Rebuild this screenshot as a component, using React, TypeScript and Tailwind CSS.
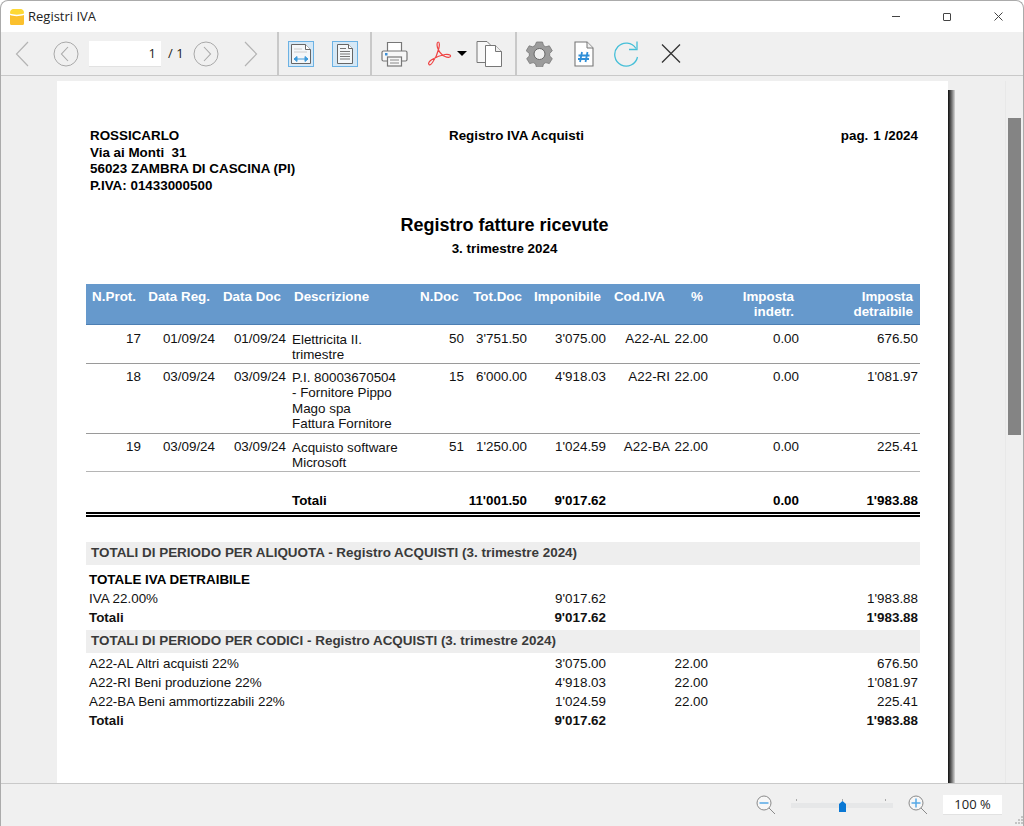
import React from "react";

const cols =
  "grid grid-cols-[55px_74px_71px_134px_44px_63px_79px_64px_38px_91px_119px_2px]";

const rows = [
  {
    height: "h-[39px] pt-[6px]",
    border: "border-[#9a9a9a]",
    prot: "17",
    reg: "01/09/24",
    doc: "01/09/24",
    descr: ["Elettricita II.", "trimestre"],
    nDoc: "50",
    tot: "3'751.50",
    imp: "3'075.00",
    cod: "A22-AL",
    perc: "22.00",
    ind: "0.00",
    det: "676.50",
  },
  {
    height: "h-[70px] pt-[5px]",
    border: "border-[#9a9a9a]",
    prot: "18",
    reg: "03/09/24",
    doc: "03/09/24",
    descr: ["P.I. 80003670504", "- Fornitore Pippo", "Mago spa", "Fattura Fornitore"],
    nDoc: "15",
    tot: "6'000.00",
    imp: "4'918.03",
    cod: "A22-RI",
    perc: "22.00",
    ind: "0.00",
    det: "1'081.97",
  },
  {
    height: "h-[38px] pt-[5px]",
    border: "border-[#b5b5b5]",
    prot: "19",
    reg: "03/09/24",
    doc: "03/09/24",
    descr: ["Acquisto software", "Microsoft"],
    nDoc: "51",
    tot: "1'250.00",
    imp: "1'024.59",
    cod: "A22-BA",
    perc: "22.00",
    ind: "0.00",
    det: "225.41",
  },
];

const Back = ({ flip = false }: { flip?: boolean }) => (
  <svg width="14" height="26" viewBox="0 0 14 26" className={flip ? "rotate-180" : ""}>
    <path d="M13 1 1.5 13 13 25" fill="none" stroke="#b4b4b4" strokeWidth="1.2" />
  </svg>
);

const CircleArrow = ({ flip = false }: { flip?: boolean }) => (
  <svg width="26" height="26" viewBox="0 0 26 26" className={flip ? "rotate-180" : ""}>
    <circle cx="13" cy="13" r="12" fill="none" stroke="#a8a8a8" strokeWidth="1" />
    <path d="M15 6 8.5 13 15 20" fill="none" stroke="#a8a8a8" strokeWidth="1.1" />
  </svg>
);

const FitWidth = () => (
  <svg width="26" height="26" viewBox="0 0 26 26">
    <rect x="0.5" y="0.5" width="25" height="25" fill="#d5e8f6" stroke="#6cb2e4" />
    <path d="M3.5 3.5h14l5 5v14h-19z" fill="#f4f7f9" stroke="#666" />
    <path d="M17.5 3.5v5h5" fill="#fff" stroke="#666" />
    <path d="M6 8h8M6 11h13" stroke="#ccc" />
    <path d="M6 18h14M6 18l3-2.500v5zM20 18l-3-2.500v5z" fill="#3d9bdc" stroke="#3d9bdc" />
  </svg>
);

const FitPage = () => (
  <svg width="26" height="26" viewBox="0 0 26 26">
    <rect x="0.5" y="0.5" width="25" height="25" fill="#d5e8f6" stroke="#6cb2e4" />
    <path d="M5.5 3.5h11l4 4v15h-15z" fill="#f4f7f9" stroke="#666" />
    <path d="M16.5 3.5v4h4" fill="#fff" stroke="#666" />
    <path d="M8 7.500h6M8 10.500h10M8 13h10M8 15.500h10M8 18h10" stroke="#777" />
  </svg>
);

const Printer = () => (
  <svg width="27" height="26" viewBox="0 0 27 26">
    <path d="M6.5 10V1.500h14V10" fill="#fff" stroke="#777" strokeWidth="1.2" />
    <rect x="1" y="10" width="25" height="10" rx="1.5" fill="#f7f7f7" stroke="#777" strokeWidth="1.2" />
    <rect x="4" y="12" width="2.5" height="2.5" fill="#3d8fd6" />
    <rect x="6.5" y="16" width="14" height="9" fill="#f7f7f7" stroke="#777" strokeWidth="1.2" />
    <path d="M9 19h9M9 22h9" stroke="#888" />
  </svg>
);

const PdfIcon = () => (
  <svg width="25" height="25" viewBox="0 0 25 25">
    <path
      d="M2 23.500c-1.400-1.300.6-3.600 3-5 3-1.800 9-4.400 13-5 2.700-.4 5.600.1 5.600 1.500 0 1.700-3.300 1.600-5.600.5-3.400-1.600-6.400-5.400-7.500-9-.6-2-.8-5.500.7-5.500 1.600 0 1.300 3.700.6 6.500-1 4.200-3.900 10.800-6.300 14-1.200 1.600-2.500 3-3.500 2z"
      fill="none"
      stroke="#ef4444"
      strokeWidth="1.2"
    />
  </svg>
);

const CopyIcon = () => (
  <svg width="27" height="26" viewBox="0 0 27 26">
    <path d="M1 .5h10l3 3v18H1z" fill="#f7f7f7" stroke="#777" strokeWidth="1" />
    <path d="M9.500 4.500h10l6 6v15h-16z" fill="#fff" stroke="#777" strokeWidth="1" />
    <path d="M19.500 4.500v6h6" fill="#f0f0f0" stroke="#777" strokeWidth="1" />
  </svg>
);

const Gear = () => (
  <svg width="27" height="26" viewBox="0 0 27 26">
    <path
      d="M10.500 1h6l1 3.500 2.300 1.300 3.500-1 3 5-2.600 2.600v2.600l2.600 2.600-3 5-3.500-1-2.300 1.300-1 3.500h-6l-1-3.500-2.300-1.300-3.500 1-3-5 2.600-2.600v-2.600L.2 9.800l3-5 3.500 1L9 4.500z"
      fill="#9c9c9c"
      stroke="#777"
      strokeWidth="0.8"
    />
    <circle cx="13.500" cy="13" r="5.500" fill="#f0f0f0" stroke="#666" strokeWidth="1" />
  </svg>
);

const HashDoc = () => (
  <svg width="20" height="26" viewBox="0 0 20 26">
    <path d="M1 1h12l6 6v18H1z" fill="#fff" stroke="#777" strokeWidth="1.1" />
    <path d="M13 1v6h6" fill="#f0f0f0" stroke="#777" strokeWidth="1" />
    <path d="M8 11l-2 10M13.500 11l-2 10M4.500 14.500h11M4 18h11" stroke="#2f8fd8" strokeWidth="1.8" fill="none" />
  </svg>
);

const Refresh = () => (
  <svg width="26" height="26" viewBox="0 0 26 26">
    <path d="M22 7.500A11.500 11.500 0 1 0 23.500 16" fill="none" stroke="#45bfd8" strokeWidth="1.3" />
    <path d="M23 .5v8h-8" fill="none" stroke="#45bfd8" strokeWidth="1.3" />
  </svg>
);

const Magnifier = ({ plus = false }: { plus?: boolean }) => (
  <svg width="20" height="20" viewBox="0 0 20 20">
    <circle cx="8" cy="8" r="7" fill="#f7f7f7" stroke="#8a8a8a" strokeWidth="1" />
    <path d="M13 13l6 6" stroke="#8a8a8a" strokeWidth="1" />
    <path d="M3.500 8h9" stroke="#56a8e6" strokeWidth="1.5" />
    {plus && <path d="M8 3.500v9" stroke="#56a8e6" strokeWidth="1.5" />}
  </svg>
);

const Separator = () => <div className="h-[43px] w-[2px] bg-[#c9c9c9]" />;

const InvoiceRow = ({ row }: { row: (typeof rows)[number] }) => (
  <div className={`${cols} ${row.height} border-b ${row.border} text-right`}>
    <div>{row.prot}</div>
    <div>{row.reg}</div>
    <div>{row.doc}</div>
    <div className="pl-[6px] pt-[1px] text-left">
      {row.descr.map((line) => (
        <div key={line}>{line}</div>
      ))}
    </div>
    <div>{row.nDoc}</div>
    <div>{row.tot}</div>
    <div>{row.imp}</div>
    <div>{row.cod}</div>
    <div>{row.perc}</div>
    <div>{row.ind}</div>
    <div>{row.det}</div>
  </div>
);

const SummaryRow = ({
  label,
  imp,
  perc,
  det,
  bold = false,
}: {
  label: string;
  imp: string;
  perc?: string;
  det: string;
  bold?: boolean;
}) => (
  <div className={`${cols} h-[19px] items-center text-right ${bold ? "font-bold" : ""}`}>
    <div className="col-span-6 pl-[3px] text-left">{label}</div>
    <div className="col-start-7">{imp}</div>
    <div className="col-span-2 col-start-8">{perc}</div>
    <div className="col-span-2 col-start-10">{det}</div>
  </div>
);

export default function App() {
  return (
    <div className="flex h-[826px] w-[1024px] flex-col overflow-hidden rounded-t-[8px] border-x border-t border-[#ababab] bg-white font-['Liberation_Sans',sans-serif] text-[13.400px] leading-[15.300px] text-[#111]">
      {/* title bar */}
      <div className="flex h-[31px] shrink-0 items-center pl-[9px] font-['Open_Sans',sans-serif] text-[13px] text-[#222]">
        <svg width="14" height="16" viewBox="0 0 14 16">
          <path d="M0 6c3 1.500 10 1.500 14 0v8.500a1.500 1.500 0 0 1-1.500 1.500h-11A1.500 1.500 0 0 1 0 14.500z" fill="#fbc02d" />
          <path d="M0 3.500C0 1.500 2 0 3 0h8c1 0 3 1.500 3 3.500V4.500C10 6 3.500 6 0 4.500z" fill="#fdd835" />
        </svg>
        <span className="ml-[4px]">Registri IVA</span>
        <div className="ml-auto flex items-center pr-[20px]">
          <div className="h-[1px] w-[8px] bg-[#444]" />
          <div className="ml-[43px] h-[8px] w-[8px] rounded-[1px] border border-[#444]" />
          <svg width="9" height="9" viewBox="0 0 9 9" className="ml-[43px]">
            <path d="M.5.500l8 8M8.500.500l-8 8" stroke="#444" strokeWidth="1" />
          </svg>
        </div>
      </div>

      {/* toolbar */}
      <div className="flex h-[44px] shrink-0 items-center border-b border-[#c9c9c9] bg-[#f0f0f0] font-['Open_Sans',sans-serif] text-[13px] text-[#222]">
        <div className="ml-[14px]"><Back /></div>
        <div className="ml-[24px]"><CircleArrow /></div>
        <div className="ml-[10px] flex h-[26px] w-[72px] items-center justify-end border-b border-[#e2e2e2] bg-white pr-[5px] pt-[1px]">1</div>
        <div className="ml-[7px] w-[18px] pt-[1px]">/ 1</div>
        <div className="ml-[7px]"><CircleArrow flip /></div>
        <div className="ml-[25px]"><Back flip /></div>
        <div className="ml-[19px]"><Separator /></div>
        <div className="ml-[9px]"><FitWidth /></div>
        <div className="ml-[18px]"><FitPage /></div>
        <div className="ml-[12px]"><Separator /></div>
        <div className="ml-[9px]"><Printer /></div>
        <div className="ml-[19px]"><PdfIcon /></div>
        <div className="ml-[5px] h-0 w-0 border-x-[5px] border-t-[5px] border-x-transparent border-t-black" />
        <div className="ml-[9px]"><CopyIcon /></div>
        <div className="ml-[12px]"><Separator /></div>
        <div className="ml-[9px]"><Gear /></div>
        <div className="ml-[21px]"><HashDoc /></div>
        <div className="ml-[20px]"><Refresh /></div>
        <svg width="20" height="19" viewBox="0 0 20 19" className="ml-[21px]">
          <path d="M1 .500l18 18M19 .500l-18 18" stroke="#333" strokeWidth="1.3" />
        </svg>
      </div>

      {/* document area */}
      <div className="flex min-h-0 flex-1 bg-[#efefef] pl-[56px] pt-[5px]">
        <div className="h-[702px] w-[891px] shrink-0 bg-white pl-[29px] pr-[28px] pt-[47px]">
          <div className="flex h-[66px] pl-[4px] font-bold leading-[16.500px] text-black">
            <div className="w-[280px]">
              <div>ROSSICARLO</div>
              <div>Via ai Monti&nbsp; 31</div>
              <div>56023 ZAMBRA DI CASCINA (PI)</div>
              <div>P.IVA: 01433000500</div>
            </div>
            <div className="ml-[79px]">Registro IVA Acquisti</div>
            <div className="ml-auto pr-[2px]">
              pag.<span className="ml-[5px]">1 /2024</span>
            </div>
          </div>

          <div className="mt-[21px] pl-[3px] text-center text-[18px] font-bold leading-[20px] text-black">
            Registro fatture ricevute
          </div>
          <div className="mt-[6px] pl-[3px] text-center font-bold leading-[16px] text-black">
            3. trimestre 2024
          </div>

          <div className={`${cols} mt-[27px] h-[41px] border-b border-[#4d7fb3] bg-[#6699cc] pt-[5px] text-right font-bold text-white`}>
            <div className="pr-[5px]">N.Prot.</div>
            <div className="pr-[5px]">Data Reg.</div>
            <div className="pr-[5px]">Data Doc</div>
            <div className="pl-[8px] text-left">Descrizione</div>
            <div className="pr-[7px]">N.Doc</div>
            <div className="pr-[5px]">Tot.Doc</div>
            <div className="pr-[5px]">Imponibile</div>
            <div className="pr-[5px]">Cod.IVA</div>
            <div className="pr-[5px]">%</div>
            <div className="pr-[5px]">Imposta<br />indetr.</div>
            <div className="pr-[5px]">Imposta<br />detraibile</div>
          </div>

          {rows.map((row) => (
            <InvoiceRow key={row.prot} row={row} />
          ))}

          <div className={`${cols} mt-[21px] h-[19px] text-right font-bold text-black`}>
            <div className="col-span-3" />
            <div className="pl-[6px] text-left">Totali</div>
            <div className="col-span-2">11'001.50</div>
            <div>9'017.62</div>
            <div className="col-span-2" />
            <div>0.00</div>
            <div>1'983.88</div>
          </div>
          <div className="h-[5px] border-y-2 border-black" />

          <div className="mt-[25px] flex h-[23px] items-center bg-[#eeeeee] pb-[2px] pl-[5px] text-[13.450px] font-bold text-[#3a3a3a]">
            TOTALI DI PERIODO PER ALIQUOTA - Registro ACQUISTI (3. trimestre 2024)
          </div>
          <div className="flex h-[24px] items-end pb-[2px] pl-[3px] font-bold text-black">TOTALE IVA DETRAIBILE</div>
          <SummaryRow label="IVA 22.00%" imp="9'017.62" det="1'983.88" />
          <SummaryRow label="Totali" imp="9'017.62" det="1'983.88" bold />
          <div className="mt-[3px] flex h-[23px] items-center bg-[#eeeeee] pb-[2px] pl-[5px] text-[13.450px] font-bold text-[#3a3a3a]">
            TOTALI DI PERIODO PER CODICI - Registro ACQUISTI (3. trimestre 2024)
          </div>
          <div className="h-[1px]" />
          <SummaryRow label="A22-AL Altri acquisti 22%" imp="3'075.00" perc="22.00" det="676.50" />
          <SummaryRow label="A22-RI Beni produzione 22%" imp="4'918.03" perc="22.00" det="1'081.97" />
          <SummaryRow label="A22-BA Beni ammortizzabili 22%" imp="1'024.59" perc="22.00" det="225.41" />
          <SummaryRow label="Totali" imp="9'017.62" det="1'983.88" bold />
        </div>
        <div className="mt-[9px] h-[693px] w-[7px] shrink-0 bg-gradient-to-r from-[#111] to-[#d8d8d8]" />
        <div className="ml-auto h-full w-[18px] shrink-0 border-l border-[#e8e8e8] pl-[2px] pt-[37px]">
          <div className="h-[317px] w-[13px] bg-[#848484]" />
        </div>
      </div>

      {/* status bar */}
      <div className="flex h-[43px] shrink-0 items-center border-t border-[#c9c9c9] bg-[#f0f0f0] pl-[755px] font-['Open_Sans',sans-serif] text-[13px] text-[#222]">
        <Magnifier />
        <div className="relative ml-[15px] h-[5px] w-[102px] bg-[#e6e7e8]">
          <div className="absolute left-[5px] top-[-4px] h-[2px] w-[1px] bg-[#aaa]" />
          <div className="absolute left-[51px] top-[-4px] h-[2px] w-[1px] bg-[#aaa]" />
          <div className="absolute left-[94px] top-[-4px] h-[2px] w-[1px] bg-[#aaa]" />
          <svg width="7" height="11" viewBox="0 0 7 11" className="absolute left-[48px] top-[-2px]">
            <path d="M3.500 0 7 3v8H0V3z" fill="#0a78d4" />
          </svg>
        </div>
        <div className="ml-[15px]"><Magnifier plus /></div>
        <div className="ml-[15px] flex h-[20px] w-[59px] items-center justify-center border-b border-[#e2e2e2] bg-white pt-[1px]">100 %</div>
        <svg width="10" height="10" viewBox="0 0 10 10" className="ml-auto self-end">
          <path d="M8 0h2v2H8zM5 3h2v2H5zM8 3h2v2H8zM2 6h2v2H2zM5 6h2v2H5zM8 6h2v2H8z" fill="#c4c4c4" />
        </svg>
      </div>
    </div>
  );
}
